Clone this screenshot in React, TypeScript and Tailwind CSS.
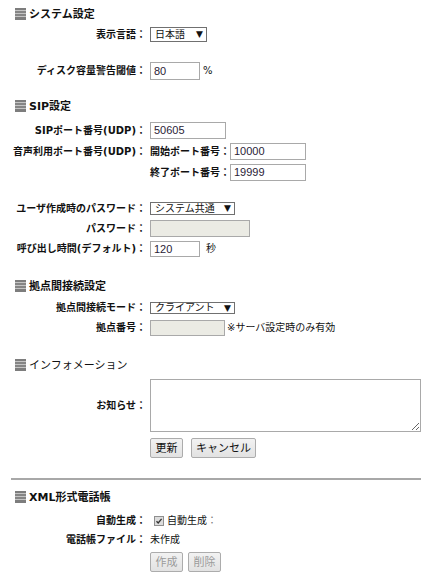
import type { ReactNode } from "react";

const jp = { fontFamily: '"DejaVu Sans", "Noto Sans CJK JP", sans-serif' };
const latin = { fontFamily: '"Liberation Sans", Arial, sans-serif' };

function StackIcon() {
  return (
    <svg width="11" height="12" viewBox="0 0 11 12" className="shrink-0">
      <rect x="0" y="0" width="11" height="12" fill="#c4c4c4" />
      <rect x="0" y="0" width="11" height="2" fill="#7d7d7d" />
      <rect x="0" y="3" width="11" height="2" fill="#858585" />
      <rect x="0" y="6" width="11" height="2" fill="#858585" />
      <rect x="0" y="9" width="11" height="3" fill="#7d7d7d" />
    </svg>
  );
}

function Title({ children, bold = true, className = "" }: { children: ReactNode; bold?: boolean; className?: string }) {
  return (
    <div className={`flex h-[16px] items-center gap-[3px] pl-[15px] ${className}`}>
      <StackIcon />
      <span className={`text-[11px] leading-none text-[#111] ${bold ? "font-bold" : "font-normal"}`} style={jp}>
        {children}
      </span>
    </div>
  );
}

function Row({ label, children, className = "", h = "h-[17px]" }: { label: ReactNode; children?: ReactNode; className?: string; h?: string }) {
  return (
    <div className={`flex items-center ${h} ${className}`}>
      <div className="w-[146px] shrink-0 text-right text-[10px] font-bold leading-none text-[#111]" style={jp}>
        {label}
      </div>
      <div className="ml-[4px] flex h-full items-center">{children}</div>
    </div>
  );
}

function Select({ value, w, h = "h-[13px]" }: { value: string; w: string; h?: string }) {
  return (
    <div className={`flex ${w} ${h} items-center justify-between border border-[#707070] bg-white pl-[4px] pr-[3px]`}>
      <span className="text-[10px] leading-none text-[#111]" style={jp}>
        {value}
      </span>
      <span className="text-[9px] leading-none text-[#111]" style={{ fontFamily: '"DejaVu Sans", sans-serif' }}>
        ▼
      </span>
    </div>
  );
}

function Input({ value = "", w, h = "h-full", disabled = false }: { value?: string; w: string; h?: string; disabled?: boolean }) {
  return (
    <div
      className={`flex ${w} ${h} items-center border border-[#a9a9a9] pl-[3px] text-[11px] leading-none text-[#2a2236] ${
        disabled ? "bg-[#ebebe4]" : "bg-white"
      }`}
      style={latin}
    >
      {value}
    </div>
  );
}

function Button({ children, w, disabled = false }: { children: ReactNode; w: string; disabled?: boolean }) {
  return (
    <div
      className={`flex ${w} h-[20px] items-center justify-center rounded-[2px] border border-[#acacac] bg-gradient-to-b from-[#f2f2f2] to-[#e2e2e2] text-[11px] leading-none ${
        disabled ? "text-[#9a9a9a]" : "text-[#111]"
      }`}
      style={jp}
    >
      {children}
    </div>
  );
}

function Note({ children, className = "" }: { children: ReactNode; className?: string }) {
  return (
    <span className={`text-[10px] leading-none text-[#111] ${className}`} style={jp}>
      {children}
    </span>
  );
}

export default function App() {
  return (
    <div className="h-[576px] w-[442px] overflow-hidden bg-white" style={jp}>
      <div className="h-[6px]" />
      <Title>システム設定</Title>

      <Row label="表示言語：" className="mt-[5px]" h="h-[15px]">
        <Select value="日本語" w="w-[57px]" h="h-[15px]" />
      </Row>

      <Row label="ディスク容量警告閾値：" className="mt-[20px]" h="h-[18px]">
        <Input value="80" w="w-[50px]" />
        <Note className="ml-[3px]">%</Note>
      </Row>

      <Title className="mt-[18px]">SIP設定</Title>

      <Row label="SIPポート番号(UDP)：" className="mt-[8px]">
        <Input value="50605" w="w-[76px]" />
      </Row>

      <Row label="音声利用ポート番号(UDP)：" className="mt-[4px]">
        <span className="w-[80px] text-[10px] font-bold leading-none text-[#111]" style={jp}>
          開始ポート番号：
        </span>
        <Input value="10000" w="w-[76px]" />
      </Row>

      <Row label="" className="mt-[4px]">
        <span className="w-[80px] text-[10px] font-bold leading-none text-[#111]" style={jp}>
          終了ポート番号：
        </span>
        <Input value="19999" w="w-[76px]" />
      </Row>

      <Row label="ユーザ作成時のパスワード：" className="mt-[21px]" h="h-[13px]">
        <Select value="システム共通" w="w-[85px]" />
      </Row>

      <Row label="パスワード：" className="mt-[5px]">
        <Input w="w-[100px]" disabled />
      </Row>

      <Row label="呼び出し時間(デフォルト)：" className="mt-[4px]" h="h-[16px]">
        <Input value="120" w="w-[50px]" />
        <Note className="ml-[6px]">秒</Note>
      </Row>

      <Title className="mt-[21px]">拠点間接続設定</Title>

      <Row label="拠点間接続モード：" className="mt-[8px]" h="h-[12px]">
        <Select value="クライアント" w="w-[85px]" h="h-[12px]" />
      </Row>

      <Row label="拠点番号：" className="mt-[6px]" h="h-[16px]">
        <Input w="w-[75px]" disabled />
        <Note className="ml-[2px]">※サーバ設定時のみ有効</Note>
      </Row>

      <Title className="mt-[21px]" bold={false}>
        インフォメーション
      </Title>

      <Row label="お知らせ：" className="mt-[6px]" h="h-[53px]">
        <textarea
          readOnly
          className="h-[53px] w-[271px] border border-[#a9a9a9] bg-white outline-none"
        />
      </Row>

      <div className="mt-[6px] flex gap-[8px] pl-[150px]">
        <Button w="w-[33px]">更新</Button>
        <Button w="w-[65px]">キャンセル</Button>
      </div>

      <div className="ml-[11px] mt-[20px] w-[410px] border-t-2 border-[#a8a8a8]" />

      <Title className="mt-[9px]">XML形式電話帳</Title>

      <Row label="自動生成：" className="mt-[8px]" h="h-[16px]">
        <div className="ml-[4px] flex h-[10px] w-[10px] items-center justify-center border border-[#8f8f8f] bg-[#dcdcdc]">
          <svg width="8" height="8" viewBox="0 0 8 8">
            <path d="M1.5 4.2 L3.2 6 L6.6 1.8" fill="none" stroke="#333" strokeWidth="1.3" />
          </svg>
        </div>
        <Note className="ml-[3px]">
          自動生成<span className="text-[#777]">：</span>
        </Note>
      </Row>

      <Row label="電話帳ファイル：" className="mt-[3px]" h="h-[16px]">
        <Note>未作成</Note>
      </Row>

      <div className="mt-[4px] flex gap-[5px] pl-[150px]">
        <Button w="w-[33px]" disabled>
          作成
        </Button>
        <Button w="w-[33px]" disabled>
          削除
        </Button>
      </div>
    </div>
  );
}
